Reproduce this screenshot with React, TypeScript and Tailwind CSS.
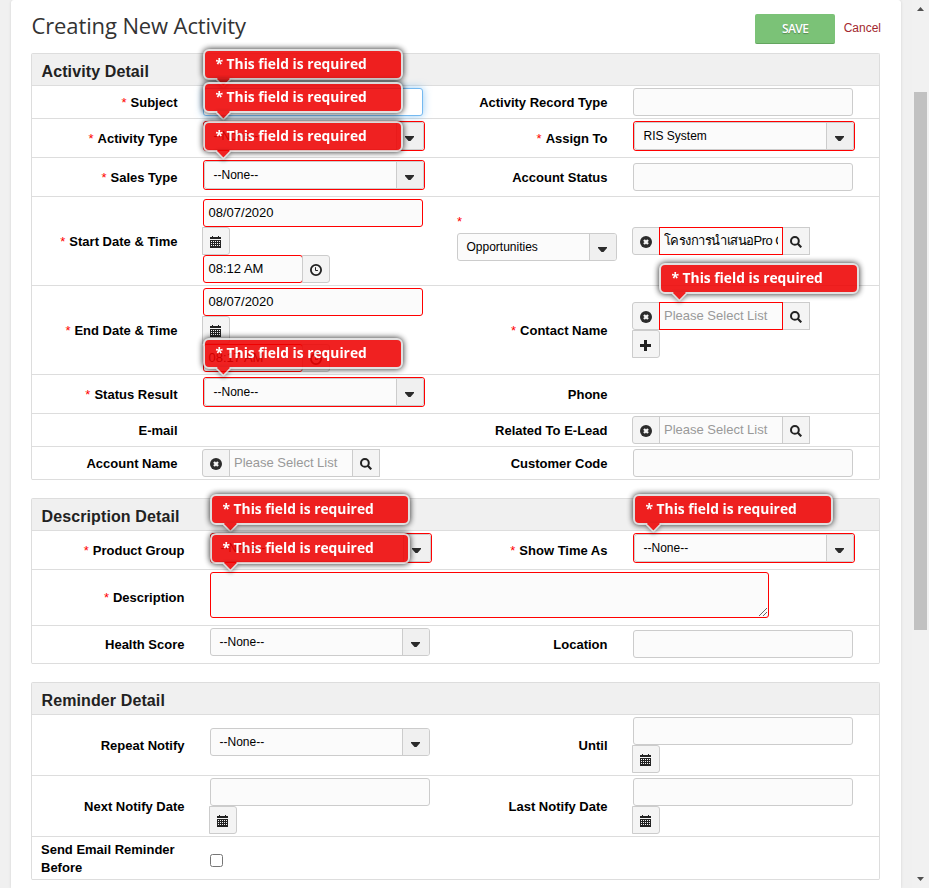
import type { ReactNode } from "react";

const ARIAL = "font-['Liberation_Sans','Noto_Sans',sans-serif]";

function Tip() {
  return (
    <div className="absolute -top-[39px] left-0 z-10 w-[200px] opacity-[0.87]">
      <div className="relative h-[31px] rounded-[6px] border-2 border-[#dddddd] bg-[#ee0101] pl-[10.5px] font-['Open_Sans',sans-serif] text-[13.8px] leading-[26px] font-bold whitespace-nowrap text-white shadow-[0_0_6px_#000000]">
        * This field is required
      </div>
      <svg
        className="absolute top-[28px] left-[11px] overflow-visible drop-shadow-[0_2px_2px_rgba(0,0,0,0.4)]"
        width="18"
        height="12"
        viewBox="0 0 18 12"
      >
        <path d="M2 2 L9.4 9.6 L16.8 2" fill="#ee0101" stroke="#dddddd" strokeWidth="1.6" />
        <path d="M2.8 0.8h13.2l-1.6 2.2H4.4z" fill="#ee0101" />
      </svg>
    </div>
  );
}

function Input({ value, state = "normal", tip }: { value?: string; state?: "normal" | "error" | "focus"; tip?: boolean }) {
  const look = {
    normal: "border-[#cccccc] bg-[#fbfbfb]",
    error: "border-[#ff0000] bg-[#fbfbfb]",
    focus: "border-[#75b9f0] bg-white shadow-[0_0_8px_rgba(82,168,236,0.6)]",
  }[state];
  return (
    <div className="relative">
      <div className={`h-7 w-[220px] rounded-[3px] border pl-[4.5px] text-[13px] leading-[25px] text-black ${look}`}>{value}</div>
      {tip && <Tip />}
    </div>
  );
}

function Select({ value, error, tip, small }: { value: string; error?: boolean; tip?: boolean; small?: boolean }) {
  const inner = (
    <div
      className={`flex h-7 rounded-[3px] border border-[#cccccc] bg-[#fbfbfb] text-[12px] leading-[26px] text-black ${small ? "w-40" : "w-[220px]"}`}
    >
      <div className="flex-1 pl-[8.5px]">{value}</div>
      <div className="flex w-[27px] justify-center rounded-r-[2px] border-l border-[#cccccc] bg-[#f0f0f0] pt-[13px] pr-px">
        <svg width="9" height="5" viewBox="0 0 9 5">
          <path d="M0 0h9v1L5.5 5h-2L0 1z" fill="#2b2b2b" />
        </svg>
      </div>
    </div>
  );
  return (
    <div className={`relative w-fit ${error ? "mb-1" : "mb-1.5"}`}>
      {error ? <div className="rounded-[3px] border border-[#ff0000]">{inner}</div> : inner}
      {tip && <Tip />}
    </div>
  );
}

function IconBox({ children, className = "" }: { children: ReactNode; className?: string }) {
  return (
    <div className={`flex h-7 w-7 shrink-0 items-center justify-center border border-[#cccccc] bg-[#f4f4f4] ${className}`}>{children}</div>
  );
}

function CalendarIcon() {
  return (
    <svg className="mt-0.5 mr-px" width="11" height="12" viewBox="0 0 11 12" shapeRendering="crispEdges">
      <path d="M2 0h1v1h5V0h1v1h2v2H0V1h2zM0 4h11v8H0z" fill="#222" />
      {[5, 7, 9].map((y) => [1, 3, 5, 7, 9].map((x) => <rect key={`${x}-${y}`} x={x} y={y} width="1" height="1" fill="#f4f4f4" />))}
    </svg>
  );
}

function ClearIcon() {
  return (
    <svg className="mt-0.5" width="12" height="12" viewBox="0 0 12 12">
      <circle cx="6" cy="6" r="6" fill="#2b2b2b" />
      <path d="M4 4l4 4M8 4L4 8" stroke="#f4f4f4" strokeWidth="2.3" />
    </svg>
  );
}

function SearchIcon() {
  return (
    <svg className="mt-0.5" width="12" height="12" viewBox="0 0 12 12" fill="none" stroke="#222">
      <circle cx="4.9" cy="4.9" r="3.9" strokeWidth="2" />
      <path d="M7.8 7.8l3.5 3.5" strokeWidth="2.2" />
    </svg>
  );
}

function ClockIcon() {
  return (
    <svg className="mt-0.5" width="12" height="12" viewBox="0 0 12 12" fill="none" stroke="#222">
      <circle cx="6" cy="6" r="5.1" strokeWidth="1.8" />
      <path d="M5.5 3.2v3.3h2.4" strokeWidth="1" />
    </svg>
  );
}

function PlusIcon() {
  return (
    <svg className="mt-[3px] mr-px" width="11" height="11" viewBox="0 0 11 11">
      <path d="M4 0h3v4h4v3H7v4H4V7H0V4h4z" fill="#222" />
    </svg>
  );
}

function DateInput({ date, time, error, tip }: { date?: string; time?: string; error?: boolean; tip?: boolean }) {
  return (
    <div>
      <Input value={date} state={error ? "error" : "normal"} tip={tip} />
      <IconBox className="-ml-px rounded-r-[3px]">
        <CalendarIcon />
      </IconBox>
      {time && (
        <div className="flex">
          <div className="h-7 w-[100px] rounded-[3px] border border-[#ff0000] bg-[#fbfbfb] pl-[4.5px] text-[13px] leading-[25px] text-black">
            {time}
          </div>
          <IconBox className="-ml-px rounded-r-[3px]">
            <ClockIcon />
          </IconBox>
        </div>
      )}
    </div>
  );
}

function Lookup({ value, error, tip, add }: { value?: string; error?: boolean; tip?: boolean; add?: boolean }) {
  return (
    <div className="-ml-px">
      <div className="flex">
        <IconBox className="rounded-l-[3px]">
          <ClearIcon />
        </IconBox>
        <div className="relative -mx-px">
          <div
            className={`relative h-7 w-[124px] border px-[4px] text-[13px] leading-[25px] ${error ? "z-[1] border-[#ff0000]" : "border-[#cccccc]"} bg-[#fbfbfb] ${value ? "tracking-[-0.54px] text-black" : "text-[#999999]"}`}
          >
            <div className="overflow-hidden whitespace-nowrap">{value ?? "Please Select List"}</div>
          </div>
          {tip && <Tip />}
        </div>
        <IconBox>
          <SearchIcon />
        </IconBox>
      </div>
      {add && (
        <IconBox className="rounded-r-[3px]">
          <PlusIcon />
        </IconBox>
      )}
    </div>
  );
}

function Label({ text, required }: { text: string; required?: boolean }) {
  return (
    <div className="pt-px pr-[0.5px] text-right text-[13px] leading-[18px] font-bold text-black">
      {required && <span className="mr-[4px] font-normal text-[#ff0000]">*</span>}
      {text}
    </div>
  );
}

function Section({ title, children }: { title: string; children: ReactNode }) {
  return (
    <section className="mb-[18px] rounded-[2px] border border-b-0 border-[#dddddd]">
      <h2 className="h-8 border-b border-[#dddddd] bg-[#f0f0f0] pl-[9.5px] text-[16px] leading-[36px] font-bold tracking-[0.11px] text-[#222222]">
        {title}
      </h2>
      {children}
    </section>
  );
}

function Row({ h, wide, children }: { h: string; wide?: boolean; children: ReactNode }) {
  return (
    <div
      className={`grid items-center border-b border-[#dddddd] ${h} ${wide ? "grid-cols-[153px_272px_151px_1fr]" : "grid-cols-[146px_279px_151px_1fr]"}`}
    >
      {children}
    </div>
  );
}

function Cell({ children, className = "" }: { children?: ReactNode; className?: string }) {
  return <div className={`pl-[25px] ${className}`}>{children}</div>;
}

export default function App() {
  return (
    <div className={`flex h-[888px] w-[929px] overflow-hidden bg-[#f0f0f0] pl-[11px] ${ARIAL}`}>
      <main className="h-[888px] w-[890px] rounded-t-[3px] bg-white pr-[21px] pl-5 shadow-[0_0_3px_rgba(0,0,0,0.12)]">
        <header className="flex h-[53px] items-start">
          <h1 className="pt-[8px] pl-[0.5px] font-['Open_Sans',sans-serif] text-[22px] leading-[34px] tracking-[-0.12px] text-[#333333]">
            Creating New Activity
          </h1>
          <button className="mt-[14px] ml-auto h-[30px] w-20 rounded-[2px] border-b border-[#63a55f] bg-[#7bc277] pl-px font-['Open_Sans',sans-serif] text-[12px] font-semibold tracking-[-0.6px] text-white [text-shadow:0_1px_1px_rgba(0,0,0,0.3)]">
            SAVE
          </button>
          <a className="mt-[18px] -mr-px ml-[9px] text-[12px] leading-5 text-[#a3282f]">Cancel</a>
        </header>

        <Section title="Activity Detail">
          <Row h="h-[33px]">
            <Label text="Subject" required />
            <Cell><Input state="focus" tip /></Cell>
            <Label text="Activity Record Type" />
            <Cell><Input /></Cell>
          </Row>
          <Row h="h-[39px]">
            <Label text="Activity Type" required />
            <Cell><Select value="--None--" error tip /></Cell>
            <Label text="Assign To" required />
            <Cell><Select value="RIS System" error /></Cell>
          </Row>
          <Row h="h-[39px]">
            <Label text="Sales Type" required />
            <Cell><Select value="--None--" error tip /></Cell>
            <Label text="Account Status" />
            <Cell><Input /></Cell>
          </Row>
          <Row h="h-[89px]">
            <Label text="Start Date & Time" required />
            <Cell><DateInput date="08/07/2020" time="08:12 AM" error /></Cell>
            <div>
              <div className="h-[18px] text-[13px] leading-[14px] text-[#ff0000]">*</div>
              <Select value="Opportunities" small />
            </div>
            <Cell><Lookup value="โครงการนำเสนอPro C" error /></Cell>
          </Row>
          <Row h="h-[89px]">
            <Label text="End Date & Time" required />
            <Cell><DateInput date="08/07/2020" time="08:17 AM" error /></Cell>
            <Label text="Contact Name" required />
            <Cell><Lookup error tip add /></Cell>
          </Row>
          <Row h="h-[39px]">
            <Label text="Status Result" required />
            <Cell><Select value="--None--" error tip /></Cell>
            <Label text="Phone" />
            <Cell />
          </Row>
          <Row h="h-[33px]">
            <Label text="E-mail" />
            <Cell />
            <Label text="Related To E-Lead" />
            <Cell><Lookup /></Cell>
          </Row>
          <Row h="h-[33px]">
            <Label text="Account Name" />
            <Cell><Lookup /></Cell>
            <Label text="Customer Code" />
            <Cell><Input /></Cell>
          </Row>
        </Section>

        <Section title="Description Detail">
          <Row h="h-[39px]" wide>
            <Label text="Product Group" required />
            <Cell><Select value="--None--" error tip /></Cell>
            <Label text="Show Time As" required />
            <Cell><Select value="--None--" error tip /></Cell>
          </Row>
          <Row h="h-[56px]" wide>
            <Label text="Description" required />
            <Cell>
              <div className="relative mb-[5px] h-[46px] w-[559px]">
                <div className="flex h-full items-end justify-end rounded-[3px] border border-[#ff0000] bg-[#fbfbfb] p-px">
                  <svg width="8" height="8" viewBox="0 0 8 8" stroke="#555" fill="none" strokeWidth="0.9">
                    <path d="M0 8L8 0M4 8l4-4" />
                  </svg>
                </div>
                <Tip />
              </div>
            </Cell>
          </Row>
          <Row h="h-[38px]" wide>
            <Label text="Health Score" />
            <Cell><Select value="--None--" /></Cell>
            <Label text="Location" />
            <Cell className="pb-px"><Input /></Cell>
          </Row>
        </Section>

        <Section title="Reminder Detail">
          <Row h="h-[61px]" wide>
            <Label text="Repeat Notify" />
            <Cell><Select value="--None--" /></Cell>
            <Label text="Until" />
            <Cell><DateInput /></Cell>
          </Row>
          <Row h="h-[61px]" wide>
            <Label text="Next Notify Date" />
            <Cell><DateInput /></Cell>
            <Label text="Last Notify Date" />
            <Cell><DateInput /></Cell>
          </Row>
          <Row h="h-[43px]" wide>
            <div className="pt-px pl-[9px] text-[13px] leading-[18px] font-bold text-black">
              Send Email Reminder Before
            </div>
            <Cell>
              <div className="mt-1 h-[13px] w-[13px] rounded-[2.5px] border border-[#767676] bg-white" />
            </Cell>
          </Row>
        </Section>
      </main>

      <aside className="ml-auto flex h-[888px] w-[17px] flex-col items-center bg-[#f1f1f1]">
        <svg className="mt-[7px]" width="7" height="4" viewBox="0 0 7 4">
          <path d="M3.5 0L7 4H0z" fill="#505050" />
        </svg>
        <div className="mt-[81px] h-[538px] w-[13px] bg-[#c1c1c1]" />
        <svg className="mt-auto mb-[7px]" width="7" height="4" viewBox="0 0 7 4">
          <path d="M0 0h7L3.5 4z" fill="#505050" />
        </svg>
      </aside>
    </div>
  );
}
